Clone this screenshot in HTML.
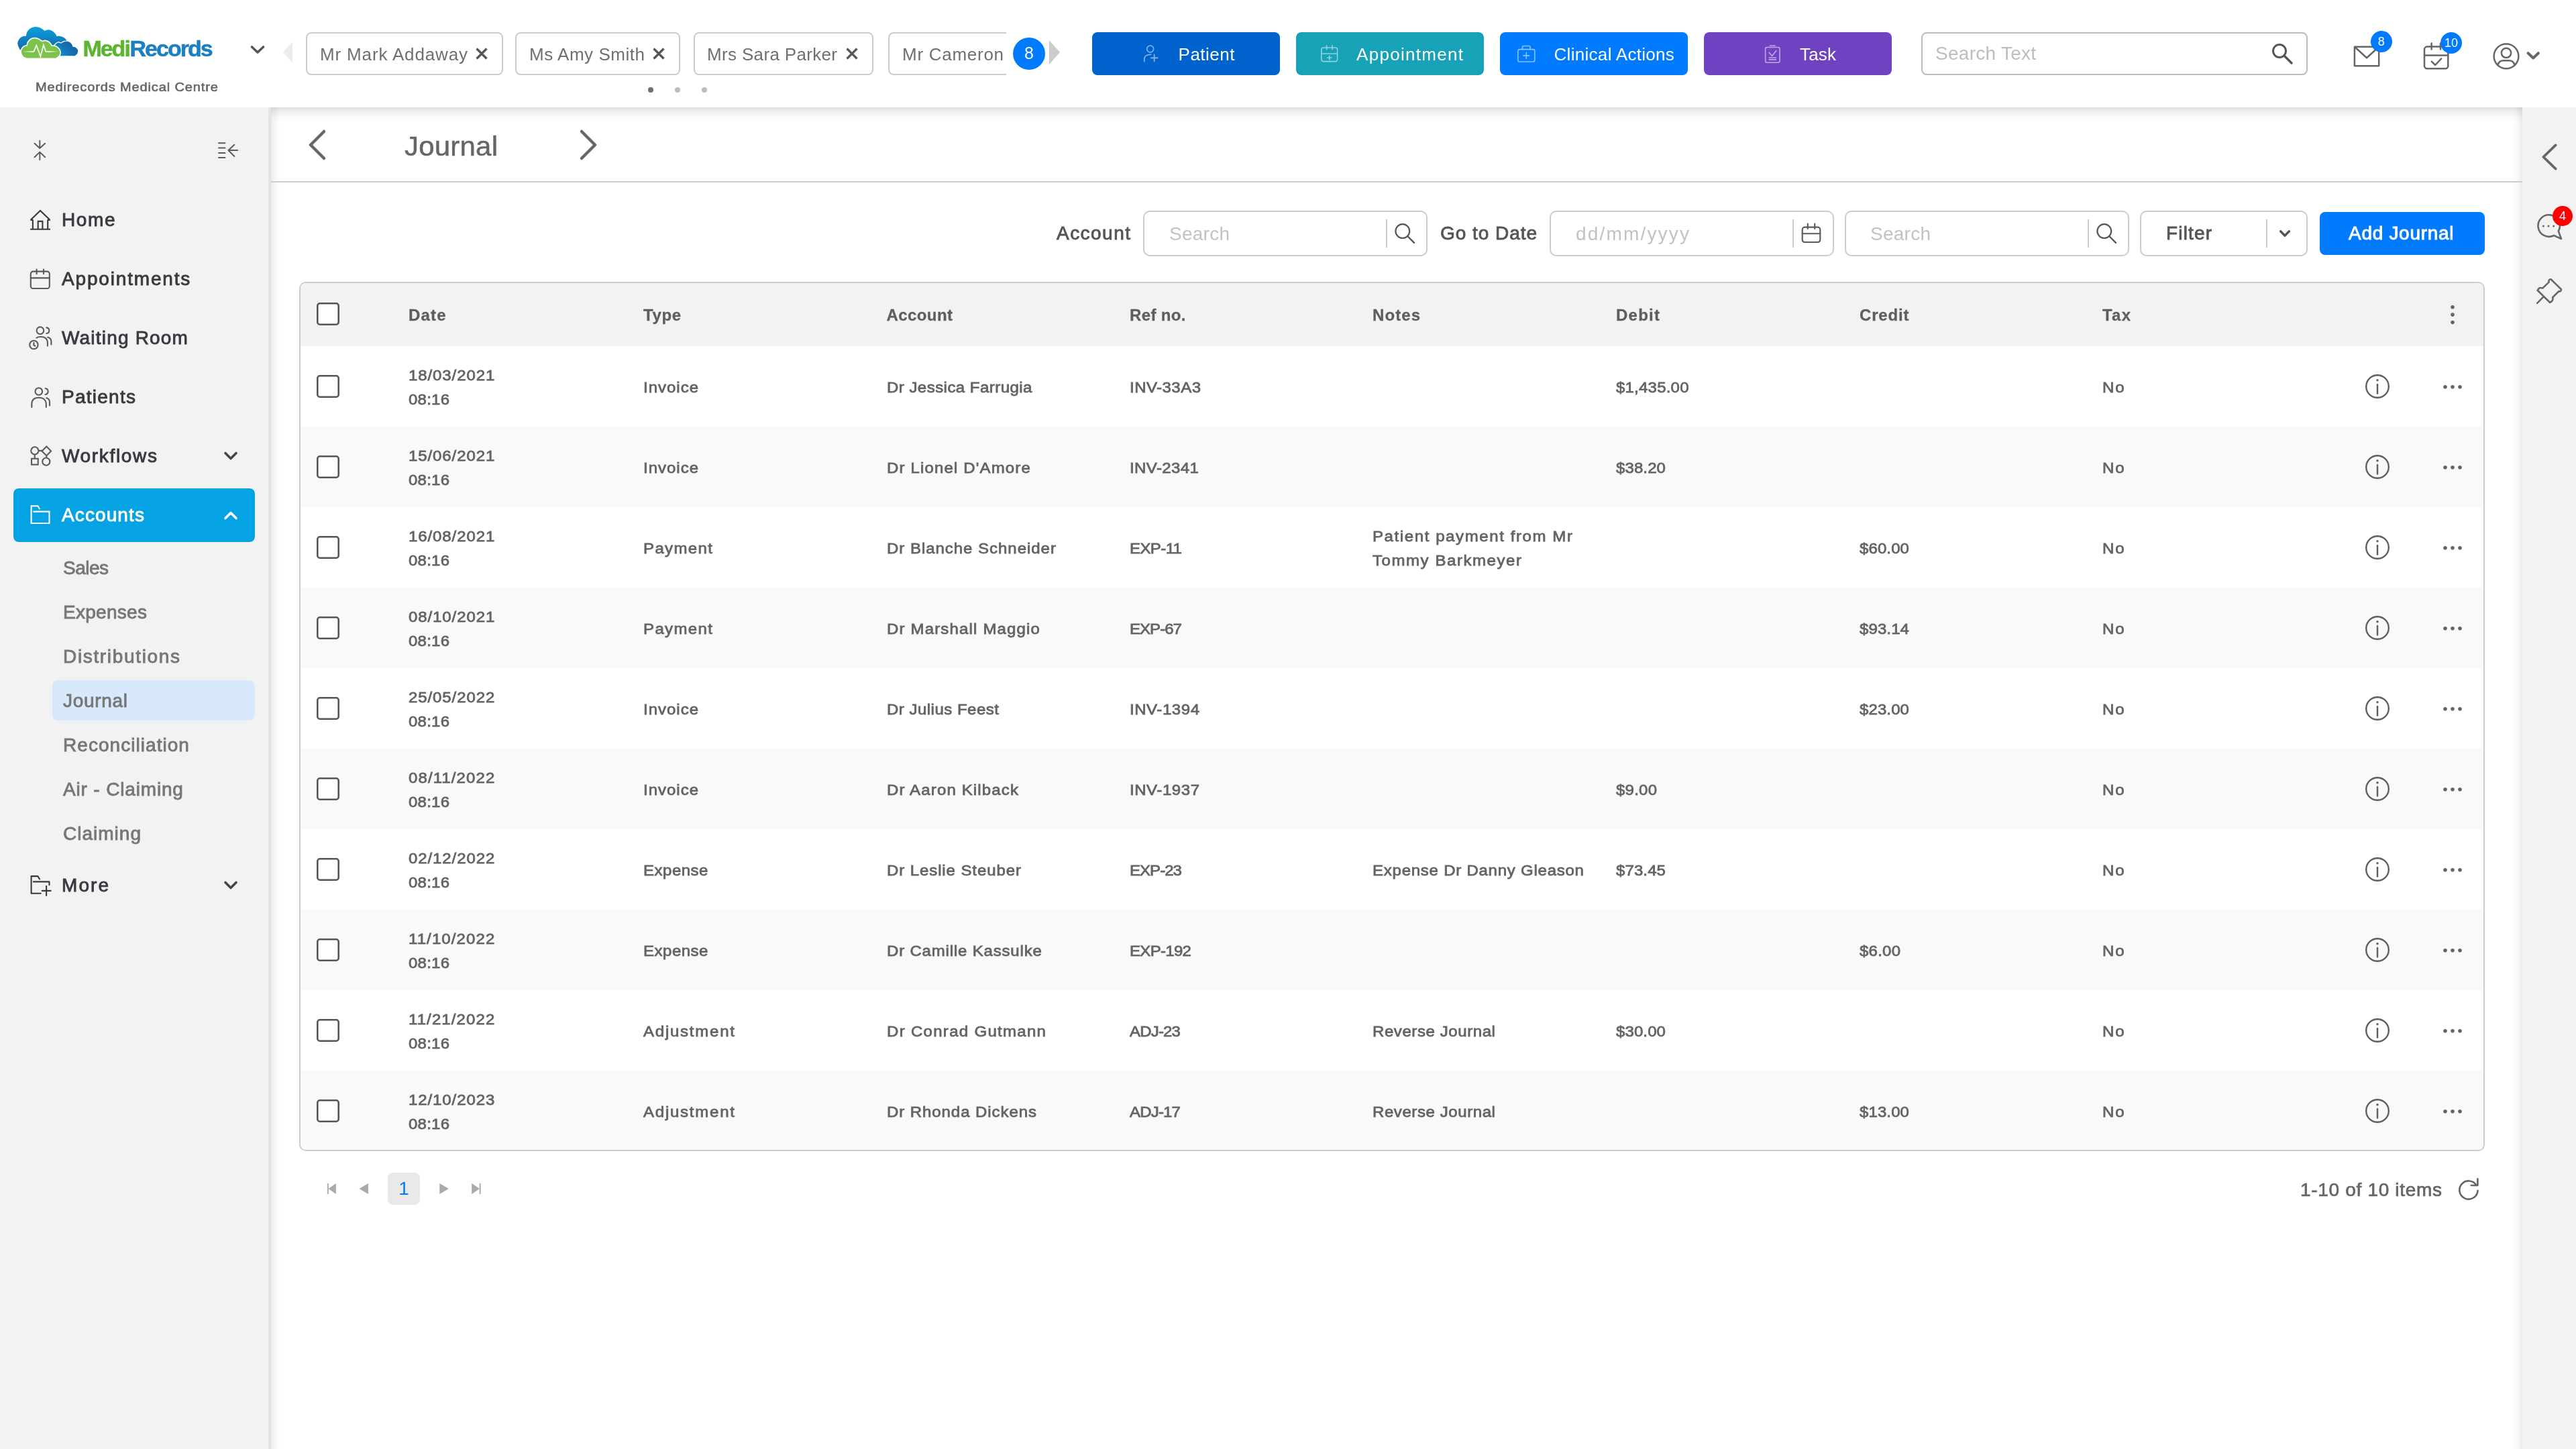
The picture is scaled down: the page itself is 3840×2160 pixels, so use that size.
<!DOCTYPE html>
<html lang="en"><head><meta charset="utf-8"><title>Journal - MediRecords</title>
<style>
html,body{margin:0;padding:0;}
body{will-change:transform;width:3840px;height:2160px;position:relative;overflow:hidden;background:#fff;font-family:"Liberation Sans",Arial,sans-serif;}
.t{position:absolute;white-space:nowrap;line-height:1;}
div{box-sizing:border-box;}
</style></head><body>
<div style="position:absolute;left:0px;top:160px;width:400px;height:2000px;background:#f2f2f2;"></div>
<div style="position:absolute;left:400px;top:160px;width:4px;height:2000px;background:#e4e4e2;"></div>
<div style="position:absolute;left:404px;top:160px;width:3356px;height:2000px;background:#fff;"></div>
<div style="position:absolute;left:404px;top:160px;width:3356px;height:22px;background:linear-gradient(to bottom, rgba(0,0,0,.125) 0, rgba(0,0,0,.07) 25%, rgba(0,0,0,.025) 60%, rgba(0,0,0,0) 100%);"></div>
<div style="position:absolute;left:404px;top:160px;width:14px;height:2000px;background:linear-gradient(to right, rgba(0,0,0,.07), rgba(0,0,0,.028) 50%, rgba(0,0,0,0));"></div>
<div style="position:absolute;left:3746px;top:160px;width:14px;height:2000px;background:linear-gradient(to left, rgba(0,0,0,.08), rgba(0,0,0,.03) 50%, rgba(0,0,0,0));"></div>
<div style="position:absolute;left:3760px;top:160px;width:80px;height:2000px;background:#f2f2f2;"></div>
<div style="position:absolute;left:0px;top:0px;width:3840px;height:160px;background:#fff;"></div>
<svg style="position:absolute;left:20px;top:34px;" width="102" height="58" viewBox="20 34 102 58" fill="none">
<defs>
<linearGradient id="lgb" gradientUnits="userSpaceOnUse" x1="0" y1="40" x2="0" y2="76"><stop offset="0" stop-color="#07a2e0"/><stop offset="1" stop-color="#1b62a2"/></linearGradient>
<linearGradient id="lgb2" gradientUnits="userSpaceOnUse" x1="112" y1="62" x2="88" y2="84"><stop offset="0" stop-color="#1a5e9b"/><stop offset=".55" stop-color="#1474b4"/><stop offset="1" stop-color="#0a98da"/></linearGradient>
<linearGradient id="lgp" gradientUnits="userSpaceOnUse" x1="34" y1="0" x2="87" y2="0"><stop offset="0" stop-color="#fff" stop-opacity="0"/><stop offset=".25" stop-color="#fff"/><stop offset=".75" stop-color="#fff"/><stop offset="1" stop-color="#fff" stop-opacity="0"/></linearGradient>
</defs>
<path d="M29.7 74.0 C29.1 72.6 26.6 68.0 26.3 65.5 C26.0 63.0 26.9 60.8 28.1 59.0 C29.3 57.2 31.5 55.5 33.3 54.6 C35.1 53.7 37.9 53.9 38.8 53.8 C39.1 52.7 39.4 49.3 40.6 47.3 C41.8 45.3 44.1 42.9 46.2 41.7 C48.4 40.5 51.1 39.9 53.5 39.9 C55.9 39.9 58.2 40.7 60.4 41.7 C62.6 42.7 65.7 45.2 66.8 45.9 C67.8 45.6 70.5 44.2 72.5 44.3 C74.5 44.4 76.8 45.4 78.5 46.5 C80.2 47.6 82.0 49.7 83.0 51.0 C84.0 52.3 84.2 53.7 84.4 54.2 C85.1 54.1 86.9 53.5 88.6 53.8 C90.3 54.1 93.0 54.9 94.7 55.8 C96.5 56.7 98.4 58.8 99.1 59.4 L99 70 L60 82 L40 82 Z" fill="url(#lgb)"/>
<path d="M80.0 68.0 C80.3 67.7 80.8 67.1 81.8 66.3 C82.8 65.5 84.7 63.4 86.2 63.0 C87.7 62.6 90.2 63.8 91.0 63.9 C91.6 63.6 93.4 62.4 94.7 61.9 C96.0 61.4 97.5 60.9 99.1 61.0 C100.6 61.1 102.6 61.5 104.0 62.3 C105.4 63.1 106.8 64.8 107.6 65.9 C108.4 67.0 108.6 68.6 108.8 69.1 C109.4 69.2 111.2 69.3 112.4 69.9 C113.6 70.5 115.0 71.7 115.7 72.8 C116.4 73.9 116.8 75.1 116.7 76.4 C116.6 77.7 116.2 79.6 115.3 80.8 C114.4 82.0 112.8 83.2 111.6 83.7 C110.4 84.2 108.6 83.9 108.0 83.9 L85 83.9 Z" fill="url(#lgb2)" stroke="#fff" stroke-width="1.2"/>
<path d="M39.4 87.3 C38.5 86.8 35.5 86.0 34.1 84.5 C32.7 83.0 31.4 80.0 31.1 78.0 C30.8 76.0 31.3 74.3 32.1 72.8 C32.9 71.2 34.8 69.5 36.1 68.7 C37.4 67.9 39.4 67.9 40.0 67.7 C40.3 66.8 40.7 63.9 41.8 62.3 C42.9 60.6 44.9 58.8 46.6 57.8 C48.4 56.8 50.4 56.5 52.3 56.6 C54.2 56.7 56.2 57.4 58.0 58.2 C59.8 59.0 62.0 61.0 62.8 61.5 C63.5 61.3 65.6 60.3 67.2 60.4 C68.8 60.5 71.0 61.4 72.5 62.3 C74.0 63.2 75.3 64.9 76.1 65.9 C76.9 66.9 77.1 67.9 77.3 68.3 C78.0 68.3 80.2 67.8 81.8 68.3 C83.3 68.8 85.3 70.0 86.6 71.1 C87.9 72.2 88.8 73.6 89.4 74.8 C90.0 76.0 90.3 77.0 90.2 78.4 C90.1 79.8 89.7 81.9 88.6 83.3 C87.5 84.7 85.1 86.2 83.8 86.9 C82.5 87.6 81.1 87.2 80.6 87.3 Z" fill="#7dc24b" stroke="#fff" stroke-width="1.6"/>
<path d="M34.5 77 L50.3 77 L54.3 67.5 L60.4 84.1 L64.8 67.1 L68.4 77 L86.6 77" stroke="url(#lgp)" stroke-width="1.7" fill="none" stroke-linejoin="miter"/>
</svg>
<span class="t" style="left:123.4px;top:54.7px;font-size:34px;font-weight:700;letter-spacing:-2px;"><span style="color:#5cb531;-webkit-text-stroke:0.5px #5cb531;">Medi</span><span style="color:#1b7fc0;-webkit-text-stroke:0.5px #1b7fc0;margin-left:0.7px;">Records</span></span>
<svg style="position:absolute;left:372px;top:66px;" width="24" height="16" viewBox="0 0 24 16" fill="none"><path d="M3.5 4 L12 12 L20.5 4" stroke="#555" stroke-width="3.6" stroke-linecap="round" stroke-linejoin="round"/></svg>
<span class="t" style="left:53.0px;top:120.3px;font-size:19.2px;color:#666;letter-spacing:0.84px;-webkit-text-stroke:0.6px #666;transform:scaleX(1.0417);transform-origin:0 0;">Medirecords Medical Centre</span>
<svg style="position:absolute;left:420px;top:60px;" width="18" height="36" viewBox="0 0 18 36" fill="none"><path d="M16 2 L2 18 L16 34 Z" fill="#ececec"/></svg>
<svg style="position:absolute;left:1562px;top:58px;" width="20" height="40" viewBox="0 0 20 40" fill="none"><path d="M2 2 L18 20 L2 38 Z" fill="#ccc"/></svg>
<div style="position:absolute;left:456px;top:48px;width:294px;height:64px;border:2px solid #ccc;border-radius:8px;background:#fff;"></div>
<span class="t" style="left:477.0px;top:68.0px;font-size:26px;color:#6f6f6f;letter-spacing:0.85px;">Mr Mark Addaway</span>
<svg style="position:absolute;left:707px;top:70px;" width="22" height="20" viewBox="0 0 22 20" fill="none"><path d="M3.5 2.5 L18.5 17.5 M18.5 2.5 L3.5 17.5" stroke="#555" stroke-width="3.2" stroke-linecap="butt"/></svg>
<div style="position:absolute;left:768px;top:48px;width:246px;height:64px;border:2px solid #ccc;border-radius:8px;background:#fff;"></div>
<span class="t" style="left:789.0px;top:68.0px;font-size:26px;color:#6f6f6f;letter-spacing:0.53px;">Ms Amy Smith</span>
<svg style="position:absolute;left:971px;top:70px;" width="22" height="20" viewBox="0 0 22 20" fill="none"><path d="M3.5 2.5 L18.5 17.5 M18.5 2.5 L3.5 17.5" stroke="#555" stroke-width="3.2" stroke-linecap="butt"/></svg>
<div style="position:absolute;left:1034px;top:48px;width:268px;height:64px;border:2px solid #ccc;border-radius:8px;background:#fff;"></div>
<span class="t" style="left:1054.0px;top:68.0px;font-size:26px;color:#6f6f6f;letter-spacing:0.34px;">Mrs Sara Parker</span>
<svg style="position:absolute;left:1259px;top:70px;" width="22" height="20" viewBox="0 0 22 20" fill="none"><path d="M3.5 2.5 L18.5 17.5 M18.5 2.5 L3.5 17.5" stroke="#555" stroke-width="3.2" stroke-linecap="butt"/></svg>
<div style="position:absolute;left:1324px;top:48px;width:176px;height:64px;border:2px solid #ccc;border-right:none;border-radius:8px 0 0 8px;background:#fff;"></div>
<span class="t" style="left:1345.0px;top:68.0px;font-size:26px;color:#6f6f6f;letter-spacing:0.73px;">Mr Cameron</span>
<div style="position:absolute;left:1510px;top:56px;width:48px;height:48px;background:#007bff;border-radius:50%;"></div>
<span class="t" style="left:1527.0px;top:67.4px;font-size:25px;color:#fff;">8</span>
<div style="position:absolute;left:966px;top:130px;width:8px;height:8px;background:#6f6f6f;border-radius:50%;"></div>
<div style="position:absolute;left:1006px;top:130px;width:8px;height:8px;background:#bdbdbd;border-radius:50%;"></div>
<div style="position:absolute;left:1046px;top:130px;width:8px;height:8px;background:#bdbdbd;border-radius:50%;"></div>
<div style="position:absolute;left:1628px;top:48px;width:280px;height:64px;background:#0062cc;border-radius:8px;"></div>
<span class="t" style="left:1756.6px;top:68.0px;font-size:26px;color:#fff;letter-spacing:0.48px;">Patient</span>
<svg style="position:absolute;left:1628px;top:48px;" width="280" height="64" viewBox="1628 48 280 64" fill="none"><g stroke="#8fb8ee" stroke-width="1.6" fill="none" stroke-linecap="round"><circle cx="1714.7" cy="73" r="5"/><path d="M1705.8 91.8 V88 C1705.8 83.5 1709.5 81.2 1715.8 81.2"/><path d="M1720.6 81.2 V91.6 M1715.6 86.4 H1725.8"/></g></svg>
<div style="position:absolute;left:1932px;top:48px;width:280px;height:64px;background:#17a2b8;border-radius:8px;"></div>
<span class="t" style="left:2022.0px;top:68.0px;font-size:26px;color:#fff;letter-spacing:1.30px;">Appointment</span>
<svg style="position:absolute;left:1932px;top:48px;" width="280" height="64" viewBox="1932 48 280 64" fill="none"><g stroke="#8fd3dd" stroke-width="1.6" fill="none" stroke-linecap="round" stroke-linejoin="round"><rect x="1969.8" y="71" width="23.8" height="20.6" rx="3"/><path d="M1969.8 80 H1993.6 M1977.6 67.8 V73.8 M1986 67.8 V73.8 M1981.7 83 V89 M1978.7 86 H1984.7"/></g></svg>
<div style="position:absolute;left:2236px;top:48px;width:280px;height:64px;background:#007bff;border-radius:8px;"></div>
<span class="t" style="left:2316.5px;top:68.0px;font-size:26px;color:#fff;letter-spacing:0.30px;">Clinical Actions</span>
<svg style="position:absolute;left:2236px;top:48px;" width="280" height="64" viewBox="2236 48 280 64" fill="none"><g stroke="#8cc4ff" stroke-width="1.6" fill="none" stroke-linecap="round" stroke-linejoin="round"><rect x="2262.8" y="73.6" width="25" height="18.4" rx="2.5"/><path d="M2269.5 73.6 V70.4 C2269.5 69 2270.3 68.5 2271.5 68.5 H2279 C2280.2 68.5 2281 69 2281 70.4 V73.6 M2275.3 78.4 V87.4 M2270.8 82.9 H2279.8"/></g></svg>
<div style="position:absolute;left:2540px;top:48px;width:280px;height:64px;background:#6f42c1;border-radius:8px;"></div>
<span class="t" style="left:2683.0px;top:68.0px;font-size:26px;color:#fff;letter-spacing:0.18px;">Task</span>
<svg style="position:absolute;left:2540px;top:48px;" width="280" height="64" viewBox="2540 48 280 64" fill="none"><g stroke="#bfa9e6" stroke-width="1.6" fill="none" stroke-linecap="round" stroke-linejoin="round"><rect x="2631.6" y="70.5" width="21.4" height="22.8" rx="2.5"/><path d="M2638.2 68 H2646.2 M2637.2 78.4 L2641.6 83.4 L2647.8 75.4 M2637.2 86 H2647.4 M2637.2 88.9 H2647.4"/></g></svg>
<div style="position:absolute;left:2864px;top:48px;width:576px;height:64px;border:2px solid #bbb;border-radius:8px;background:#fff;"></div>
<span class="t" style="left:2885.0px;top:66.3px;font-size:28px;color:#bdbdbd;letter-spacing:0.27px;">Search Text</span>
<svg style="position:absolute;left:3384px;top:62px;" width="36" height="36" viewBox="0 0 36 36" fill="none"><circle cx="14" cy="14" r="9.5" stroke="#555" stroke-width="3"/><path d="M21 21 L32 32" stroke="#555" stroke-width="3.4" stroke-linecap="round"/></svg>
<svg style="position:absolute;left:3500px;top:60px;" width="60" height="50" viewBox="3500 60 60 50" fill="none"><path d="M3509.9 69.7 H3546.2 V98.2 H3509.9 Z M3510.5 70.3 L3528 86.2 L3545.6 70.3" stroke="#666" stroke-width="2.5" stroke-linejoin="round"/></svg>
<div style="position:absolute;left:3533.5px;top:45.5px;width:32.5px;height:32.5px;background:#007bff;border-radius:50%;"></div>
<span class="t" style="left:3544.7px;top:53.4px;font-size:18px;color:#fff;">8</span>
<svg style="position:absolute;left:3604px;top:58px;" width="60" height="54" viewBox="3604 58 60 54" fill="none"><g stroke="#666" stroke-width="2.5" stroke-linecap="round" stroke-linejoin="round"><rect x="3614" y="69.6" width="35.3" height="32.6" rx="4"/><path d="M3614 82.4 H3649.3 M3624.6 64.5 V73.5 M3638 64.5 V73.5 M3624.8 91.6 L3630.2 97 L3639.2 87.4"/></g></svg>
<div style="position:absolute;left:3637.7px;top:47.7px;width:32.5px;height:32.5px;background:#007bff;border-radius:50%;"></div>
<span class="t" style="left:3644.0px;top:55.4px;font-size:18px;color:#fff;">10</span>
<svg style="position:absolute;left:3710px;top:58px;" width="90" height="54" viewBox="3710 58 90 54" fill="none"><g stroke="#666" stroke-width="2.5" fill="none" stroke-linecap="round" stroke-linejoin="round"><circle cx="3736" cy="83.8" r="18.4"/><circle cx="3736" cy="78.9" r="7.2"/><path d="M3723.6 97.2 C3724.5 91.6 3728 90.2 3732 90.2 H3740 C3744 90.2 3747.5 91.6 3748.4 97.2"/></g><path d="M3768.6 79.2 L3776.2 86.5 L3783.9 79.2" stroke="#666" stroke-width="4" stroke-linecap="round" stroke-linejoin="round"/></svg>
<svg style="position:absolute;left:44px;top:204px;" width="32" height="40" viewBox="44 204 32 40" fill="none"><g stroke="#5a5a5a" stroke-width="1.9" stroke-linecap="round" stroke-linejoin="round"><path d="M59.3 209.6 V221 M51.5 213.8 L59.3 221 L67.2 213.8 M59.3 238.2 V226.6 M51.5 234.3 L59.3 226.6 L67.2 234.3"/></g></svg>
<svg style="position:absolute;left:320px;top:206px;" width="40" height="36" viewBox="320 206 40 36" fill="none"><g stroke="#5a5a5a" stroke-width="2" stroke-linecap="round" stroke-linejoin="round"><path d="M326 213.2 H335.4 M326 220.5 H335.4 M326 227.9 H335.4 M326 235.1 H335.4 M340.4 224 H354.2 M349.3 215.8 L340.4 224 L349.3 233"/></g></svg>
<svg style="position:absolute;left:42px;top:310px;" width="36" height="36" viewBox="0 0 36 36" fill="none"><g stroke="#38393f" stroke-width="2.1" fill="none" stroke-linecap="butt" stroke-linejoin="miter"><path d="M3.3 17.9 H7.4 M28.6 17.9 H32.8 M4.2 17.2 L18 3.9 L31.9 17.2 M6.9 17.9 V31.8 M29.2 17.9 V31.8 M3.1 31.8 H33 M14.7 31.8 V19.9 H21.4 V31.8"/></g></svg>
<span class="t" style="left:92.4px;top:315.2px;font-size:26.9px;color:#393a40;letter-spacing:1.57px;-webkit-text-stroke:0.85px #393a40;transform:scaleX(1.0409);transform-origin:0 0;">Home</span>
<svg style="position:absolute;left:42px;top:398px;" width="36" height="36" viewBox="0 0 36 36" fill="none"><g stroke="#5a5a5a" stroke-width="2.1" fill="none" stroke-linecap="round" stroke-linejoin="round"><rect x="3.8" y="6.6" width="28" height="25.4" rx="3.6"/><path d="M3.8 16.4 H31.8 M12.6 3.5 V10.2 M23 3.5 V10.2"/></g></svg>
<span class="t" style="left:92.4px;top:403.2px;font-size:26.9px;color:#393a40;letter-spacing:1.76px;-webkit-text-stroke:0.85px #393a40;transform:scaleX(1.0409);transform-origin:0 0;">Appointments</span>
<svg style="position:absolute;left:42px;top:486px;" width="36" height="36" viewBox="0 0 36 36" fill="none"><g stroke="#5a5a5a" stroke-width="2.1" fill="none" stroke-linecap="round" stroke-linejoin="round"><circle cx="17.9" cy="6.65" r="5.3"/><path d="M27.4 2.4 C32.6 3.2 32.6 10.2 27.4 11"/><path d="M12.5 17.6 C14 16.5 16 16 18.5 16 C25 16 28.9 19 28.9 25 V29.6"/><path d="M29.2 16.7 C32.8 17.4 34.4 19.6 34.4 23 V27.5"/><circle cx="8.4" cy="28" r="6.2"/><path d="M8.4 24.8 V28.5 L10.3 29.6"/></g></svg>
<span class="t" style="left:92.4px;top:491.2px;font-size:26.9px;color:#393a40;letter-spacing:1.15px;-webkit-text-stroke:0.85px #393a40;transform:scaleX(1.0409);transform-origin:0 0;">Waiting Room</span>
<svg style="position:absolute;left:42px;top:574px;" width="36" height="36" viewBox="0 0 36 36" fill="none"><g stroke="#5a5a5a" stroke-width="2.1" fill="none" stroke-linecap="round" stroke-linejoin="round"><circle cx="15.8" cy="9.5" r="5.3"/><path d="M25.6 5 C31 5.8 31 13.2 25.6 14"/><path d="M5.3 32.9 V28.6 C5.3 22.5 9 18.8 15.8 18.8 C22.8 18.8 26.8 22.5 26.8 28.6 V32.9"/><path d="M27.3 19.2 C30.6 20 32 22.3 32 25.5 V30.5"/></g></svg>
<span class="t" style="left:92.4px;top:579.2px;font-size:26.9px;color:#393a40;letter-spacing:1.21px;-webkit-text-stroke:0.85px #393a40;transform:scaleX(1.0409);transform-origin:0 0;">Patients</span>
<svg style="position:absolute;left:42px;top:662px;" width="36" height="36" viewBox="0 0 36 36" fill="none"><g stroke="#5a5a5a" stroke-width="2.1" fill="none" stroke-linecap="miter" stroke-linejoin="miter"><circle cx="9.8" cy="9.9" r="5.6"/><path d="M27.3 3.6 L34.1 10.4 L27.3 17.2 L20.5 10.4 Z"/><rect x="5" y="21.7" width="9.7" height="8.9"/><circle cx="26.8" cy="26.1" r="5.6"/><path d="M15.4 9.9 H21 M9.8 15.5 V21.7 M27.3 17.2 V20.5"/></g></svg>
<span class="t" style="left:92.4px;top:667.2px;font-size:26.9px;color:#393a40;letter-spacing:1.61px;-webkit-text-stroke:0.85px #393a40;transform:scaleX(1.0409);transform-origin:0 0;">Workflows</span>
<svg style="position:absolute;left:332px;top:672px;" width="24" height="16" viewBox="0 0 24 16" fill="none"><path d="M4 3.5 L12 11.5 L20 3.5" stroke="#444" stroke-width="3.6" stroke-linecap="round" stroke-linejoin="round"/></svg>
<div style="position:absolute;left:20px;top:728px;width:360px;height:80px;background:#05a3e4;border-radius:8px;"></div>
<svg style="position:absolute;left:42px;top:750px;" width="36" height="36" viewBox="0 0 36 36" fill="none"><g stroke="#fff" stroke-width="2.1" fill="none" stroke-linecap="butt" stroke-linejoin="miter"><path d="M17.3 9 L14.3 4.3 H4.6 V30 H31.5 V12.6 H7.4"/></g></svg>
<span class="t" style="left:92.4px;top:755.2px;font-size:26.9px;color:#fff;letter-spacing:1.07px;-webkit-text-stroke:0.85px #fff;transform:scaleX(1.0409);transform-origin:0 0;">Accounts</span>
<svg style="position:absolute;left:332px;top:760px;" width="24" height="16" viewBox="0 0 24 16" fill="none"><path d="M4 12.5 L12 4.5 L20 12.5" stroke="#fff" stroke-width="3.6" stroke-linecap="round" stroke-linejoin="round"/></svg>
<svg style="position:absolute;left:42px;top:1302px;" width="36" height="36" viewBox="0 0 36 36" fill="none"><g stroke="#38393f" stroke-width="2.1" fill="none" stroke-linecap="round" stroke-linejoin="round"><path d="M17 8.5 L14.3 4.15 H4.6 V29.8 H18.8 M7.9 12.4 H31.5 V17.2 M27.1 18.8 V32.9 M20.7 25.9 H33.7"/></g></svg>
<span class="t" style="left:92.4px;top:1307.2px;font-size:26.9px;color:#393a40;letter-spacing:1.99px;-webkit-text-stroke:0.85px #393a40;transform:scaleX(1.0409);transform-origin:0 0;">More</span>
<svg style="position:absolute;left:332px;top:1312px;" width="24" height="16" viewBox="0 0 24 16" fill="none"><path d="M4 3.5 L12 11.5 L20 3.5" stroke="#444" stroke-width="3.6" stroke-linecap="round" stroke-linejoin="round"/></svg>
<span class="t" style="left:94.0px;top:833.8px;font-size:26.9px;color:#777;letter-spacing:-0.49px;-webkit-text-stroke:0.85px #777;transform:scaleX(1.0409);transform-origin:0 0;">Sales</span>
<span class="t" style="left:94.0px;top:899.8px;font-size:26.9px;color:#777;letter-spacing:0.28px;-webkit-text-stroke:0.85px #777;transform:scaleX(1.0409);transform-origin:0 0;">Expenses</span>
<span class="t" style="left:94.0px;top:965.8px;font-size:26.9px;color:#777;letter-spacing:1.60px;-webkit-text-stroke:0.85px #777;transform:scaleX(1.0409);transform-origin:0 0;">Distributions</span>
<div style="position:absolute;left:78px;top:1014px;width:302px;height:60px;background:#d8e9fb;border-radius:8px;"></div>
<span class="t" style="left:94.0px;top:1031.8px;font-size:26.9px;color:#777;letter-spacing:0.67px;-webkit-text-stroke:0.85px #777;transform:scaleX(1.0409);transform-origin:0 0;">Journal</span>
<span class="t" style="left:94.0px;top:1097.8px;font-size:26.9px;color:#777;letter-spacing:1.01px;-webkit-text-stroke:0.85px #777;transform:scaleX(1.0409);transform-origin:0 0;">Reconciliation</span>
<span class="t" style="left:94.0px;top:1163.8px;font-size:26.9px;color:#777;letter-spacing:0.81px;-webkit-text-stroke:0.85px #777;transform:scaleX(1.0409);transform-origin:0 0;">Air - Claiming</span>
<span class="t" style="left:94.0px;top:1229.8px;font-size:26.9px;color:#777;letter-spacing:0.97px;-webkit-text-stroke:0.85px #777;transform:scaleX(1.0409);transform-origin:0 0;">Claiming</span>
<svg style="position:absolute;left:3780px;top:206px;" width="44" height="56" viewBox="3780 206 44 56" fill="none"><path d="M3809.6 216.4 L3791.4 234 L3809.6 251.6" stroke="#666" stroke-width="3.8" stroke-linecap="round" stroke-linejoin="round"/></svg>
<svg style="position:absolute;left:3774px;top:312px;" width="56" height="54" viewBox="3774 312 56 54" fill="none"><path d="M3807 351 L3818 356 L3813.8 344.5 A16.2 16.2 0 1 0 3807 351 Z" stroke="#666" stroke-width="2.6" fill="none" stroke-linejoin="round"/><circle cx="3791.4" cy="337" r="1.5" fill="#666"/><circle cx="3799" cy="337" r="1.5" fill="#666"/><circle cx="3806.6" cy="337" r="1.5" fill="#666"/></svg>
<div style="position:absolute;left:3805px;top:307px;width:30px;height:30px;background:#f00;border-radius:50%;"></div>
<span class="t" style="left:3815.0px;top:313.2px;font-size:18px;color:#fff;">4</span>
<svg style="position:absolute;left:3774px;top:408px;" width="52" height="52" viewBox="3774 408 52 52" fill="none"><g stroke="#666" stroke-width="2.6" fill="none" stroke-linejoin="round" stroke-linecap="round"><path d="M3802.6 416.2 L3817.8 431.2 C3818.3 433.6 3816.6 434.8 3814.4 434.3 L3805.2 443.2 C3805.8 445.8 3805.4 447.4 3804.4 448.6 L3801.2 451 L3782.6 432.8 L3785 429.6 C3786.4 428.8 3788 428.8 3790.2 429.6 L3799.6 420.6 C3798.9 418.2 3800 416 3802.6 416.2 Z"/><path d="M3791.6 442.4 L3782.2 451.8"/></g></svg>
<svg style="position:absolute;left:456px;top:190px;" width="34" height="52" viewBox="0 0 34 52" fill="none"><path d="M27 6 L7 26 L27 46" stroke="#666" stroke-width="4.5" stroke-linecap="round" stroke-linejoin="round"/></svg>
<svg style="position:absolute;left:860px;top:190px;" width="34" height="52" viewBox="0 0 34 52" fill="none"><path d="M7 6 L27 26 L7 46" stroke="#666" stroke-width="4.5" stroke-linecap="round" stroke-linejoin="round"/></svg>
<span class="t" style="left:603.0px;top:197.8px;font-size:41.3px;color:#666;letter-spacing:0.21px;-webkit-text-stroke:0.5px #666;transform:scaleX(1.0169);transform-origin:0 0;">Journal</span>
<div style="position:absolute;left:404px;top:270px;width:3356px;height:2px;background:#ccc;"></div>
<span class="t" style="left:1574.5px;top:335.3px;font-size:26.9px;color:#555;letter-spacing:1.41px;-webkit-text-stroke:0.85px #555;transform:scaleX(1.0409);transform-origin:0 0;">Account</span>
<div style="position:absolute;left:1704px;top:314px;width:424px;height:68px;border:2px solid #ccc;border-radius:10px;background:#fff;"></div>
<span class="t" style="left:1743.0px;top:334.8px;font-size:28px;color:#c2c2c2;letter-spacing:0.26px;">Search</span>
<div style="position:absolute;left:2066px;top:327px;width:2px;height:42px;background:#ccc;"></div>
<svg style="position:absolute;left:2077px;top:331px;" width="34" height="34" viewBox="0 0 34 34" fill="none"><circle cx="13.8" cy="13.6" r="10.4" stroke="#555" stroke-width="2.2"/><path d="M21.2 21 L31 30.8" stroke="#555" stroke-width="2.4" stroke-linecap="round"/></svg>
<span class="t" style="left:2147.0px;top:335.3px;font-size:26.9px;color:#555;letter-spacing:0.92px;-webkit-text-stroke:0.85px #555;transform:scaleX(1.0409);transform-origin:0 0;">Go to Date</span>
<div style="position:absolute;left:2310px;top:314px;width:424px;height:68px;border:2px solid #ccc;border-radius:10px;background:#fff;"></div>
<span class="t" style="left:2349.0px;top:334.8px;font-size:28px;color:#c2c2c2;letter-spacing:2.18px;">dd/mm/yyyy</span>
<div style="position:absolute;left:2672px;top:327px;width:2px;height:42px;background:#ccc;"></div>
<svg style="position:absolute;left:2680px;top:328px;" width="40" height="40" viewBox="2680 328 40 40" fill="none"><g stroke="#5a5a5a" stroke-width="2.1" fill="none" stroke-linecap="round" stroke-linejoin="round"><rect x="2686.7" y="338.6" width="26.6" height="22.4" rx="3.5"/><path d="M2686.7 348.3 H2713.3 M2694.8 333.6 V341 M2705.2 333.6 V341"/></g></svg>
<div style="position:absolute;left:2750px;top:314px;width:424px;height:68px;border:2px solid #ccc;border-radius:10px;background:#fff;"></div>
<span class="t" style="left:2788.0px;top:334.8px;font-size:28px;color:#c2c2c2;letter-spacing:0.26px;">Search</span>
<div style="position:absolute;left:3112px;top:327px;width:2px;height:42px;background:#ccc;"></div>
<svg style="position:absolute;left:3123px;top:331px;" width="34" height="34" viewBox="0 0 34 34" fill="none"><circle cx="13.8" cy="13.6" r="10.4" stroke="#555" stroke-width="2.2"/><path d="M21.2 21 L31 30.8" stroke="#555" stroke-width="2.4" stroke-linecap="round"/></svg>
<div style="position:absolute;left:3190px;top:314px;width:250px;height:68px;border:2px solid #ccc;border-radius:10px;background:#fff;"></div>
<span class="t" style="left:3229.0px;top:335.3px;font-size:26.9px;color:#555;letter-spacing:1.11px;-webkit-text-stroke:0.85px #555;transform:scaleX(1.0409);transform-origin:0 0;">Filter</span>
<div style="position:absolute;left:3378px;top:327px;width:2px;height:42px;background:#ccc;"></div>
<svg style="position:absolute;left:3394px;top:338px;" width="24" height="20" viewBox="3394 338 24 20" fill="none"><path d="M3399.6 344.8 L3406 351.2 L3412.4 344.8" stroke="#555" stroke-width="3.4" stroke-linecap="round" stroke-linejoin="round"/></svg>
<div style="position:absolute;left:3458px;top:316px;width:246px;height:64px;background:#007bff;border-radius:8px;"></div>
<span class="t" style="left:3500.5px;top:335.3px;font-size:26.9px;color:#fff;letter-spacing:0.68px;-webkit-text-stroke:0.85px #fff;transform:scaleX(1.0409);transform-origin:0 0;">Add Journal</span>
<div style="position:absolute;left:446px;top:420px;width:3258px;height:1296px;border:2px solid #ccc;border-radius:10px;background:#fff;overflow:hidden;"></div>
<div style="position:absolute;left:448px;top:422px;width:3254px;height:94px;background:#f2f2f2;border-radius:8px 8px 0 0;"></div>
<span class="t" style="left:609.0px;top:457.7px;font-size:24px;color:#5e5e5e;font-weight:700;letter-spacing:1.16px;-webkit-text-stroke:0.3px #5e5e5e;">Date</span>
<span class="t" style="left:959.0px;top:457.7px;font-size:24px;color:#5e5e5e;font-weight:700;letter-spacing:0.59px;-webkit-text-stroke:0.3px #5e5e5e;">Type</span>
<span class="t" style="left:1321.5px;top:457.7px;font-size:24px;color:#5e5e5e;font-weight:700;letter-spacing:0.42px;-webkit-text-stroke:0.3px #5e5e5e;">Account</span>
<span class="t" style="left:1684.0px;top:457.7px;font-size:24px;color:#5e5e5e;font-weight:700;letter-spacing:0.36px;-webkit-text-stroke:0.3px #5e5e5e;">Ref no.</span>
<span class="t" style="left:2046.0px;top:457.7px;font-size:24px;color:#5e5e5e;font-weight:700;letter-spacing:1.08px;-webkit-text-stroke:0.3px #5e5e5e;">Notes</span>
<span class="t" style="left:2409.0px;top:457.7px;font-size:24px;color:#5e5e5e;font-weight:700;letter-spacing:1.25px;-webkit-text-stroke:0.3px #5e5e5e;">Debit</span>
<span class="t" style="left:2772.0px;top:457.7px;font-size:24px;color:#5e5e5e;font-weight:700;letter-spacing:0.83px;-webkit-text-stroke:0.3px #5e5e5e;">Credit</span>
<span class="t" style="left:3134.0px;top:457.7px;font-size:24px;color:#5e5e5e;font-weight:700;letter-spacing:1.21px;-webkit-text-stroke:0.3px #5e5e5e;">Tax</span>
<svg style="position:absolute;left:470px;top:449px;" width="38" height="38" viewBox="0 0 38 38" fill="none"><rect x="3.3" y="3.3" width="31.4" height="31.4" rx="3.5" fill="#fff" stroke="#555" stroke-width="2.6"/></svg>
<svg style="position:absolute;left:3646px;top:450px;" width="20" height="38" viewBox="3646 450 20 38" fill="none"><g fill="#666"><circle cx="3656" cy="457.7" r="2.8"/><circle cx="3656" cy="469.1" r="2.8"/><circle cx="3656" cy="480.5" r="2.8"/></g></svg>
<svg style="position:absolute;left:470px;top:557px;" width="38" height="38" viewBox="0 0 38 38" fill="none"><rect x="3.3" y="3.3" width="31.4" height="31.4" rx="3.5" fill="#fff" stroke="#555" stroke-width="2.6"/></svg>
<span class="t" style="left:609.0px;top:548.2px;font-size:22.9px;color:#646464;letter-spacing:0.87px;-webkit-text-stroke:0.8px #646464;transform:scaleX(1.0480);transform-origin:0 0;">18/03/2021</span>
<span class="t" style="left:609.0px;top:584.2px;font-size:22.9px;color:#646464;letter-spacing:0.23px;-webkit-text-stroke:0.8px #646464;transform:scaleX(1.0480);transform-origin:0 0;">08:16</span>
<span class="t" style="left:959.0px;top:566.2px;font-size:22.9px;color:#646464;letter-spacing:0.95px;-webkit-text-stroke:0.8px #646464;transform:scaleX(1.0480);transform-origin:0 0;">Invoice</span>
<span class="t" style="left:1321.5px;top:566.2px;font-size:22.9px;color:#646464;letter-spacing:0.45px;-webkit-text-stroke:0.8px #646464;transform:scaleX(1.0480);transform-origin:0 0;">Dr Jessica Farrugia</span>
<span class="t" style="left:1684.0px;top:566.2px;font-size:22.9px;color:#646464;letter-spacing:0.45px;-webkit-text-stroke:0.8px #646464;transform:scaleX(1.0480);transform-origin:0 0;">INV-33A3</span>
<span class="t" style="left:2409.0px;top:566.2px;font-size:22.9px;color:#646464;letter-spacing:0.21px;-webkit-text-stroke:0.8px #646464;transform:scaleX(1.0480);transform-origin:0 0;">$1,435.00</span>
<span class="t" style="left:3134.0px;top:566.2px;font-size:22.9px;color:#646464;letter-spacing:1.74px;-webkit-text-stroke:0.8px #646464;transform:scaleX(1.0480);transform-origin:0 0;">No</span>
<svg style="position:absolute;left:3524px;top:556px;" width="40" height="40" viewBox="0 0 40 40" fill="none"><circle cx="20" cy="20" r="16.8" stroke="#606060" stroke-width="2.4"/><circle cx="20" cy="10.8" r="1.7" fill="#606060"/><path d="M20 17 V30.5" stroke="#606060" stroke-width="2.5" stroke-linecap="round"/></svg>
<svg style="position:absolute;left:3636px;top:567px;" width="40" height="20" viewBox="0 0 40 20" fill="none"><g fill="#666"><circle cx="9" cy="9.8" r="2.8"/><circle cx="20" cy="9.8" r="2.8"/><circle cx="31" cy="9.8" r="2.8"/></g></svg>
<div style="position:absolute;left:448px;top:636px;width:3254px;height:120px;background:#f9f9f9;"></div>
<svg style="position:absolute;left:470px;top:677px;" width="38" height="38" viewBox="0 0 38 38" fill="none"><rect x="3.3" y="3.3" width="31.4" height="31.4" rx="3.5" fill="#fff" stroke="#555" stroke-width="2.6"/></svg>
<span class="t" style="left:609.0px;top:668.2px;font-size:22.9px;color:#646464;letter-spacing:0.87px;-webkit-text-stroke:0.8px #646464;transform:scaleX(1.0480);transform-origin:0 0;">15/06/2021</span>
<span class="t" style="left:609.0px;top:704.2px;font-size:22.9px;color:#646464;letter-spacing:0.23px;-webkit-text-stroke:0.8px #646464;transform:scaleX(1.0480);transform-origin:0 0;">08:16</span>
<span class="t" style="left:959.0px;top:686.2px;font-size:22.9px;color:#646464;letter-spacing:0.95px;-webkit-text-stroke:0.8px #646464;transform:scaleX(1.0480);transform-origin:0 0;">Invoice</span>
<span class="t" style="left:1321.5px;top:686.2px;font-size:22.9px;color:#646464;letter-spacing:1.11px;-webkit-text-stroke:0.8px #646464;transform:scaleX(1.0480);transform-origin:0 0;">Dr Lionel D'Amore</span>
<span class="t" style="left:1684.0px;top:686.2px;font-size:22.9px;color:#646464;letter-spacing:0.40px;-webkit-text-stroke:0.8px #646464;transform:scaleX(1.0480);transform-origin:0 0;">INV-2341</span>
<span class="t" style="left:2409.0px;top:686.2px;font-size:22.9px;color:#646464;letter-spacing:0.11px;-webkit-text-stroke:0.8px #646464;transform:scaleX(1.0480);transform-origin:0 0;">$38.20</span>
<span class="t" style="left:3134.0px;top:686.2px;font-size:22.9px;color:#646464;letter-spacing:1.74px;-webkit-text-stroke:0.8px #646464;transform:scaleX(1.0480);transform-origin:0 0;">No</span>
<svg style="position:absolute;left:3524px;top:676px;" width="40" height="40" viewBox="0 0 40 40" fill="none"><circle cx="20" cy="20" r="16.8" stroke="#606060" stroke-width="2.4"/><circle cx="20" cy="10.8" r="1.7" fill="#606060"/><path d="M20 17 V30.5" stroke="#606060" stroke-width="2.5" stroke-linecap="round"/></svg>
<svg style="position:absolute;left:3636px;top:687px;" width="40" height="20" viewBox="0 0 40 20" fill="none"><g fill="#666"><circle cx="9" cy="9.8" r="2.8"/><circle cx="20" cy="9.8" r="2.8"/><circle cx="31" cy="9.8" r="2.8"/></g></svg>
<svg style="position:absolute;left:470px;top:797px;" width="38" height="38" viewBox="0 0 38 38" fill="none"><rect x="3.3" y="3.3" width="31.4" height="31.4" rx="3.5" fill="#fff" stroke="#555" stroke-width="2.6"/></svg>
<span class="t" style="left:609.0px;top:788.2px;font-size:22.9px;color:#646464;letter-spacing:0.87px;-webkit-text-stroke:0.8px #646464;transform:scaleX(1.0480);transform-origin:0 0;">16/08/2021</span>
<span class="t" style="left:609.0px;top:824.2px;font-size:22.9px;color:#646464;letter-spacing:0.23px;-webkit-text-stroke:0.8px #646464;transform:scaleX(1.0480);transform-origin:0 0;">08:16</span>
<span class="t" style="left:959.0px;top:806.2px;font-size:22.9px;color:#646464;letter-spacing:1.32px;-webkit-text-stroke:0.8px #646464;transform:scaleX(1.0480);transform-origin:0 0;">Payment</span>
<span class="t" style="left:1321.5px;top:806.2px;font-size:22.9px;color:#646464;letter-spacing:0.93px;-webkit-text-stroke:0.8px #646464;transform:scaleX(1.0480);transform-origin:0 0;">Dr Blanche Schneider</span>
<span class="t" style="left:1684.0px;top:806.2px;font-size:22.9px;color:#646464;letter-spacing:-0.56px;-webkit-text-stroke:0.8px #646464;transform:scaleX(1.0480);transform-origin:0 0;">EXP-11</span>
<span class="t" style="left:2046.0px;top:788.2px;font-size:22.9px;color:#646464;letter-spacing:1.53px;-webkit-text-stroke:0.8px #646464;transform:scaleX(1.0480);transform-origin:0 0;">Patient payment from Mr</span>
<span class="t" style="left:2046.0px;top:824.2px;font-size:22.9px;color:#646464;letter-spacing:1.50px;-webkit-text-stroke:0.8px #646464;transform:scaleX(1.0480);transform-origin:0 0;">Tommy Barkmeyer</span>
<span class="t" style="left:2772.0px;top:806.2px;font-size:22.9px;color:#646464;letter-spacing:0.11px;-webkit-text-stroke:0.8px #646464;transform:scaleX(1.0480);transform-origin:0 0;">$60.00</span>
<span class="t" style="left:3134.0px;top:806.2px;font-size:22.9px;color:#646464;letter-spacing:1.74px;-webkit-text-stroke:0.8px #646464;transform:scaleX(1.0480);transform-origin:0 0;">No</span>
<svg style="position:absolute;left:3524px;top:796px;" width="40" height="40" viewBox="0 0 40 40" fill="none"><circle cx="20" cy="20" r="16.8" stroke="#606060" stroke-width="2.4"/><circle cx="20" cy="10.8" r="1.7" fill="#606060"/><path d="M20 17 V30.5" stroke="#606060" stroke-width="2.5" stroke-linecap="round"/></svg>
<svg style="position:absolute;left:3636px;top:807px;" width="40" height="20" viewBox="0 0 40 20" fill="none"><g fill="#666"><circle cx="9" cy="9.8" r="2.8"/><circle cx="20" cy="9.8" r="2.8"/><circle cx="31" cy="9.8" r="2.8"/></g></svg>
<div style="position:absolute;left:448px;top:876px;width:3254px;height:120px;background:#f9f9f9;"></div>
<svg style="position:absolute;left:470px;top:917px;" width="38" height="38" viewBox="0 0 38 38" fill="none"><rect x="3.3" y="3.3" width="31.4" height="31.4" rx="3.5" fill="#fff" stroke="#555" stroke-width="2.6"/></svg>
<span class="t" style="left:609.0px;top:908.2px;font-size:22.9px;color:#646464;letter-spacing:0.87px;-webkit-text-stroke:0.8px #646464;transform:scaleX(1.0480);transform-origin:0 0;">08/10/2021</span>
<span class="t" style="left:609.0px;top:944.2px;font-size:22.9px;color:#646464;letter-spacing:0.23px;-webkit-text-stroke:0.8px #646464;transform:scaleX(1.0480);transform-origin:0 0;">08:16</span>
<span class="t" style="left:959.0px;top:926.2px;font-size:22.9px;color:#646464;letter-spacing:1.32px;-webkit-text-stroke:0.8px #646464;transform:scaleX(1.0480);transform-origin:0 0;">Payment</span>
<span class="t" style="left:1321.5px;top:926.2px;font-size:22.9px;color:#646464;letter-spacing:1.12px;-webkit-text-stroke:0.8px #646464;transform:scaleX(1.0480);transform-origin:0 0;">Dr Marshall Maggio</span>
<span class="t" style="left:1684.0px;top:926.2px;font-size:22.9px;color:#646464;letter-spacing:-0.90px;-webkit-text-stroke:0.8px #646464;transform:scaleX(1.0480);transform-origin:0 0;">EXP-67</span>
<span class="t" style="left:2772.0px;top:926.2px;font-size:22.9px;color:#646464;letter-spacing:0.11px;-webkit-text-stroke:0.8px #646464;transform:scaleX(1.0480);transform-origin:0 0;">$93.14</span>
<span class="t" style="left:3134.0px;top:926.2px;font-size:22.9px;color:#646464;letter-spacing:1.74px;-webkit-text-stroke:0.8px #646464;transform:scaleX(1.0480);transform-origin:0 0;">No</span>
<svg style="position:absolute;left:3524px;top:916px;" width="40" height="40" viewBox="0 0 40 40" fill="none"><circle cx="20" cy="20" r="16.8" stroke="#606060" stroke-width="2.4"/><circle cx="20" cy="10.8" r="1.7" fill="#606060"/><path d="M20 17 V30.5" stroke="#606060" stroke-width="2.5" stroke-linecap="round"/></svg>
<svg style="position:absolute;left:3636px;top:927px;" width="40" height="20" viewBox="0 0 40 20" fill="none"><g fill="#666"><circle cx="9" cy="9.8" r="2.8"/><circle cx="20" cy="9.8" r="2.8"/><circle cx="31" cy="9.8" r="2.8"/></g></svg>
<svg style="position:absolute;left:470px;top:1037px;" width="38" height="38" viewBox="0 0 38 38" fill="none"><rect x="3.3" y="3.3" width="31.4" height="31.4" rx="3.5" fill="#fff" stroke="#555" stroke-width="2.6"/></svg>
<span class="t" style="left:609.0px;top:1028.2px;font-size:22.9px;color:#646464;letter-spacing:0.87px;-webkit-text-stroke:0.8px #646464;transform:scaleX(1.0480);transform-origin:0 0;">25/05/2022</span>
<span class="t" style="left:609.0px;top:1064.2px;font-size:22.9px;color:#646464;letter-spacing:0.23px;-webkit-text-stroke:0.8px #646464;transform:scaleX(1.0480);transform-origin:0 0;">08:16</span>
<span class="t" style="left:959.0px;top:1046.2px;font-size:22.9px;color:#646464;letter-spacing:0.95px;-webkit-text-stroke:0.8px #646464;transform:scaleX(1.0480);transform-origin:0 0;">Invoice</span>
<span class="t" style="left:1321.5px;top:1046.2px;font-size:22.9px;color:#646464;letter-spacing:0.47px;-webkit-text-stroke:0.8px #646464;transform:scaleX(1.0480);transform-origin:0 0;">Dr Julius Feest</span>
<span class="t" style="left:1684.0px;top:1046.2px;font-size:22.9px;color:#646464;letter-spacing:0.54px;-webkit-text-stroke:0.8px #646464;transform:scaleX(1.0480);transform-origin:0 0;">INV-1394</span>
<span class="t" style="left:2772.0px;top:1046.2px;font-size:22.9px;color:#646464;letter-spacing:0.11px;-webkit-text-stroke:0.8px #646464;transform:scaleX(1.0480);transform-origin:0 0;">$23.00</span>
<span class="t" style="left:3134.0px;top:1046.2px;font-size:22.9px;color:#646464;letter-spacing:1.74px;-webkit-text-stroke:0.8px #646464;transform:scaleX(1.0480);transform-origin:0 0;">No</span>
<svg style="position:absolute;left:3524px;top:1036px;" width="40" height="40" viewBox="0 0 40 40" fill="none"><circle cx="20" cy="20" r="16.8" stroke="#606060" stroke-width="2.4"/><circle cx="20" cy="10.8" r="1.7" fill="#606060"/><path d="M20 17 V30.5" stroke="#606060" stroke-width="2.5" stroke-linecap="round"/></svg>
<svg style="position:absolute;left:3636px;top:1047px;" width="40" height="20" viewBox="0 0 40 20" fill="none"><g fill="#666"><circle cx="9" cy="9.8" r="2.8"/><circle cx="20" cy="9.8" r="2.8"/><circle cx="31" cy="9.8" r="2.8"/></g></svg>
<div style="position:absolute;left:448px;top:1116px;width:3254px;height:120px;background:#f9f9f9;"></div>
<svg style="position:absolute;left:470px;top:1157px;" width="38" height="38" viewBox="0 0 38 38" fill="none"><rect x="3.3" y="3.3" width="31.4" height="31.4" rx="3.5" fill="#fff" stroke="#555" stroke-width="2.6"/></svg>
<span class="t" style="left:609.0px;top:1148.2px;font-size:22.9px;color:#646464;letter-spacing:1.06px;-webkit-text-stroke:0.8px #646464;transform:scaleX(1.0480);transform-origin:0 0;">08/11/2022</span>
<span class="t" style="left:609.0px;top:1184.2px;font-size:22.9px;color:#646464;letter-spacing:0.23px;-webkit-text-stroke:0.8px #646464;transform:scaleX(1.0480);transform-origin:0 0;">08:16</span>
<span class="t" style="left:959.0px;top:1166.2px;font-size:22.9px;color:#646464;letter-spacing:0.95px;-webkit-text-stroke:0.8px #646464;transform:scaleX(1.0480);transform-origin:0 0;">Invoice</span>
<span class="t" style="left:1321.5px;top:1166.2px;font-size:22.9px;color:#646464;letter-spacing:1.10px;-webkit-text-stroke:0.8px #646464;transform:scaleX(1.0480);transform-origin:0 0;">Dr Aaron Kilback</span>
<span class="t" style="left:1684.0px;top:1166.2px;font-size:22.9px;color:#646464;letter-spacing:0.54px;-webkit-text-stroke:0.8px #646464;transform:scaleX(1.0480);transform-origin:0 0;">INV-1937</span>
<span class="t" style="left:2409.0px;top:1166.2px;font-size:22.9px;color:#646464;letter-spacing:0.23px;-webkit-text-stroke:0.8px #646464;transform:scaleX(1.0480);transform-origin:0 0;">$9.00</span>
<span class="t" style="left:3134.0px;top:1166.2px;font-size:22.9px;color:#646464;letter-spacing:1.74px;-webkit-text-stroke:0.8px #646464;transform:scaleX(1.0480);transform-origin:0 0;">No</span>
<svg style="position:absolute;left:3524px;top:1156px;" width="40" height="40" viewBox="0 0 40 40" fill="none"><circle cx="20" cy="20" r="16.8" stroke="#606060" stroke-width="2.4"/><circle cx="20" cy="10.8" r="1.7" fill="#606060"/><path d="M20 17 V30.5" stroke="#606060" stroke-width="2.5" stroke-linecap="round"/></svg>
<svg style="position:absolute;left:3636px;top:1167px;" width="40" height="20" viewBox="0 0 40 20" fill="none"><g fill="#666"><circle cx="9" cy="9.8" r="2.8"/><circle cx="20" cy="9.8" r="2.8"/><circle cx="31" cy="9.8" r="2.8"/></g></svg>
<svg style="position:absolute;left:470px;top:1277px;" width="38" height="38" viewBox="0 0 38 38" fill="none"><rect x="3.3" y="3.3" width="31.4" height="31.4" rx="3.5" fill="#fff" stroke="#555" stroke-width="2.6"/></svg>
<span class="t" style="left:609.0px;top:1268.2px;font-size:22.9px;color:#646464;letter-spacing:0.87px;-webkit-text-stroke:0.8px #646464;transform:scaleX(1.0480);transform-origin:0 0;">02/12/2022</span>
<span class="t" style="left:609.0px;top:1304.2px;font-size:22.9px;color:#646464;letter-spacing:0.23px;-webkit-text-stroke:0.8px #646464;transform:scaleX(1.0480);transform-origin:0 0;">08:16</span>
<span class="t" style="left:959.0px;top:1286.2px;font-size:22.9px;color:#646464;letter-spacing:0.49px;-webkit-text-stroke:0.8px #646464;transform:scaleX(1.0480);transform-origin:0 0;">Expense</span>
<span class="t" style="left:1321.5px;top:1286.2px;font-size:22.9px;color:#646464;letter-spacing:0.87px;-webkit-text-stroke:0.8px #646464;transform:scaleX(1.0480);transform-origin:0 0;">Dr Leslie Steuber</span>
<span class="t" style="left:1684.0px;top:1286.2px;font-size:22.9px;color:#646464;letter-spacing:-0.90px;-webkit-text-stroke:0.8px #646464;transform:scaleX(1.0480);transform-origin:0 0;">EXP-23</span>
<span class="t" style="left:2046.0px;top:1286.2px;font-size:22.9px;color:#646464;letter-spacing:0.73px;-webkit-text-stroke:0.8px #646464;transform:scaleX(1.0480);transform-origin:0 0;">Expense Dr Danny Gleason</span>
<span class="t" style="left:2409.0px;top:1286.2px;font-size:22.9px;color:#646464;letter-spacing:0.11px;-webkit-text-stroke:0.8px #646464;transform:scaleX(1.0480);transform-origin:0 0;">$73.45</span>
<span class="t" style="left:3134.0px;top:1286.2px;font-size:22.9px;color:#646464;letter-spacing:1.74px;-webkit-text-stroke:0.8px #646464;transform:scaleX(1.0480);transform-origin:0 0;">No</span>
<svg style="position:absolute;left:3524px;top:1276px;" width="40" height="40" viewBox="0 0 40 40" fill="none"><circle cx="20" cy="20" r="16.8" stroke="#606060" stroke-width="2.4"/><circle cx="20" cy="10.8" r="1.7" fill="#606060"/><path d="M20 17 V30.5" stroke="#606060" stroke-width="2.5" stroke-linecap="round"/></svg>
<svg style="position:absolute;left:3636px;top:1287px;" width="40" height="20" viewBox="0 0 40 20" fill="none"><g fill="#666"><circle cx="9" cy="9.8" r="2.8"/><circle cx="20" cy="9.8" r="2.8"/><circle cx="31" cy="9.8" r="2.8"/></g></svg>
<div style="position:absolute;left:448px;top:1356px;width:3254px;height:120px;background:#f9f9f9;"></div>
<svg style="position:absolute;left:470px;top:1397px;" width="38" height="38" viewBox="0 0 38 38" fill="none"><rect x="3.3" y="3.3" width="31.4" height="31.4" rx="3.5" fill="#fff" stroke="#555" stroke-width="2.6"/></svg>
<span class="t" style="left:609.0px;top:1388.2px;font-size:22.9px;color:#646464;letter-spacing:1.06px;-webkit-text-stroke:0.8px #646464;transform:scaleX(1.0480);transform-origin:0 0;">11/10/2022</span>
<span class="t" style="left:609.0px;top:1424.2px;font-size:22.9px;color:#646464;letter-spacing:0.23px;-webkit-text-stroke:0.8px #646464;transform:scaleX(1.0480);transform-origin:0 0;">08:16</span>
<span class="t" style="left:959.0px;top:1406.2px;font-size:22.9px;color:#646464;letter-spacing:0.49px;-webkit-text-stroke:0.8px #646464;transform:scaleX(1.0480);transform-origin:0 0;">Expense</span>
<span class="t" style="left:1321.5px;top:1406.2px;font-size:22.9px;color:#646464;letter-spacing:0.79px;-webkit-text-stroke:0.8px #646464;transform:scaleX(1.0480);transform-origin:0 0;">Dr Camille Kassulke</span>
<span class="t" style="left:1684.0px;top:1406.2px;font-size:22.9px;color:#646464;letter-spacing:-0.65px;-webkit-text-stroke:0.8px #646464;transform:scaleX(1.0480);transform-origin:0 0;">EXP-192</span>
<span class="t" style="left:2772.0px;top:1406.2px;font-size:22.9px;color:#646464;letter-spacing:0.23px;-webkit-text-stroke:0.8px #646464;transform:scaleX(1.0480);transform-origin:0 0;">$6.00</span>
<span class="t" style="left:3134.0px;top:1406.2px;font-size:22.9px;color:#646464;letter-spacing:1.74px;-webkit-text-stroke:0.8px #646464;transform:scaleX(1.0480);transform-origin:0 0;">No</span>
<svg style="position:absolute;left:3524px;top:1396px;" width="40" height="40" viewBox="0 0 40 40" fill="none"><circle cx="20" cy="20" r="16.8" stroke="#606060" stroke-width="2.4"/><circle cx="20" cy="10.8" r="1.7" fill="#606060"/><path d="M20 17 V30.5" stroke="#606060" stroke-width="2.5" stroke-linecap="round"/></svg>
<svg style="position:absolute;left:3636px;top:1407px;" width="40" height="20" viewBox="0 0 40 20" fill="none"><g fill="#666"><circle cx="9" cy="9.8" r="2.8"/><circle cx="20" cy="9.8" r="2.8"/><circle cx="31" cy="9.8" r="2.8"/></g></svg>
<svg style="position:absolute;left:470px;top:1517px;" width="38" height="38" viewBox="0 0 38 38" fill="none"><rect x="3.3" y="3.3" width="31.4" height="31.4" rx="3.5" fill="#fff" stroke="#555" stroke-width="2.6"/></svg>
<span class="t" style="left:609.0px;top:1508.2px;font-size:22.9px;color:#646464;letter-spacing:1.06px;-webkit-text-stroke:0.8px #646464;transform:scaleX(1.0480);transform-origin:0 0;">11/21/2022</span>
<span class="t" style="left:609.0px;top:1544.2px;font-size:22.9px;color:#646464;letter-spacing:0.23px;-webkit-text-stroke:0.8px #646464;transform:scaleX(1.0480);transform-origin:0 0;">08:16</span>
<span class="t" style="left:959.0px;top:1526.2px;font-size:22.9px;color:#646464;letter-spacing:1.69px;-webkit-text-stroke:0.8px #646464;transform:scaleX(1.0480);transform-origin:0 0;">Adjustment</span>
<span class="t" style="left:1321.5px;top:1526.2px;font-size:22.9px;color:#646464;letter-spacing:1.25px;-webkit-text-stroke:0.8px #646464;transform:scaleX(1.0480);transform-origin:0 0;">Dr Conrad Gutmann</span>
<span class="t" style="left:1684.0px;top:1526.2px;font-size:22.9px;color:#646464;letter-spacing:-0.77px;-webkit-text-stroke:0.8px #646464;transform:scaleX(1.0480);transform-origin:0 0;">ADJ-23</span>
<span class="t" style="left:2046.0px;top:1526.2px;font-size:22.9px;color:#646464;letter-spacing:0.56px;-webkit-text-stroke:0.8px #646464;transform:scaleX(1.0480);transform-origin:0 0;">Reverse Journal</span>
<span class="t" style="left:2409.0px;top:1526.2px;font-size:22.9px;color:#646464;letter-spacing:0.11px;-webkit-text-stroke:0.8px #646464;transform:scaleX(1.0480);transform-origin:0 0;">$30.00</span>
<span class="t" style="left:3134.0px;top:1526.2px;font-size:22.9px;color:#646464;letter-spacing:1.74px;-webkit-text-stroke:0.8px #646464;transform:scaleX(1.0480);transform-origin:0 0;">No</span>
<svg style="position:absolute;left:3524px;top:1516px;" width="40" height="40" viewBox="0 0 40 40" fill="none"><circle cx="20" cy="20" r="16.8" stroke="#606060" stroke-width="2.4"/><circle cx="20" cy="10.8" r="1.7" fill="#606060"/><path d="M20 17 V30.5" stroke="#606060" stroke-width="2.5" stroke-linecap="round"/></svg>
<svg style="position:absolute;left:3636px;top:1527px;" width="40" height="20" viewBox="0 0 40 20" fill="none"><g fill="#666"><circle cx="9" cy="9.8" r="2.8"/><circle cx="20" cy="9.8" r="2.8"/><circle cx="31" cy="9.8" r="2.8"/></g></svg>
<div style="position:absolute;left:448px;top:1596px;width:3254px;height:118px;background:#f9f9f9;border-radius:0 0 8px 8px;"></div>
<svg style="position:absolute;left:470px;top:1637px;" width="38" height="38" viewBox="0 0 38 38" fill="none"><rect x="3.3" y="3.3" width="31.4" height="31.4" rx="3.5" fill="#fff" stroke="#555" stroke-width="2.6"/></svg>
<span class="t" style="left:609.0px;top:1628.2px;font-size:22.9px;color:#646464;letter-spacing:0.87px;-webkit-text-stroke:0.8px #646464;transform:scaleX(1.0480);transform-origin:0 0;">12/10/2023</span>
<span class="t" style="left:609.0px;top:1664.2px;font-size:22.9px;color:#646464;letter-spacing:0.23px;-webkit-text-stroke:0.8px #646464;transform:scaleX(1.0480);transform-origin:0 0;">08:16</span>
<span class="t" style="left:959.0px;top:1646.2px;font-size:22.9px;color:#646464;letter-spacing:1.69px;-webkit-text-stroke:0.8px #646464;transform:scaleX(1.0480);transform-origin:0 0;">Adjustment</span>
<span class="t" style="left:1321.5px;top:1646.2px;font-size:22.9px;color:#646464;letter-spacing:0.89px;-webkit-text-stroke:0.8px #646464;transform:scaleX(1.0480);transform-origin:0 0;">Dr Rhonda Dickens</span>
<span class="t" style="left:1684.0px;top:1646.2px;font-size:22.9px;color:#646464;letter-spacing:-0.77px;-webkit-text-stroke:0.8px #646464;transform:scaleX(1.0480);transform-origin:0 0;">ADJ-17</span>
<span class="t" style="left:2046.0px;top:1646.2px;font-size:22.9px;color:#646464;letter-spacing:0.56px;-webkit-text-stroke:0.8px #646464;transform:scaleX(1.0480);transform-origin:0 0;">Reverse Journal</span>
<span class="t" style="left:2772.0px;top:1646.2px;font-size:22.9px;color:#646464;letter-spacing:0.11px;-webkit-text-stroke:0.8px #646464;transform:scaleX(1.0480);transform-origin:0 0;">$13.00</span>
<span class="t" style="left:3134.0px;top:1646.2px;font-size:22.9px;color:#646464;letter-spacing:1.74px;-webkit-text-stroke:0.8px #646464;transform:scaleX(1.0480);transform-origin:0 0;">No</span>
<svg style="position:absolute;left:3524px;top:1636px;" width="40" height="40" viewBox="0 0 40 40" fill="none"><circle cx="20" cy="20" r="16.8" stroke="#606060" stroke-width="2.4"/><circle cx="20" cy="10.8" r="1.7" fill="#606060"/><path d="M20 17 V30.5" stroke="#606060" stroke-width="2.5" stroke-linecap="round"/></svg>
<svg style="position:absolute;left:3636px;top:1647px;" width="40" height="20" viewBox="0 0 40 20" fill="none"><g fill="#666"><circle cx="9" cy="9.8" r="2.8"/><circle cx="20" cy="9.8" r="2.8"/><circle cx="31" cy="9.8" r="2.8"/></g></svg>
<svg style="position:absolute;left:480px;top:1756px;" width="244" height="32" viewBox="480 1756 244 32" fill="none"><g fill="#aaa"><rect x="487.9" y="1764" width="1.9" height="16"/><path d="M489.7 1772 L500.8 1764 V1780 Z"/><path d="M535.5 1772 L548.9 1764 V1780 Z"/><path d="M668.8 1772 L655.3 1764 V1780 Z"/><path d="M714.9 1772 L703.2 1764 V1780 Z"/><rect x="714.7" y="1764" width="1.9" height="16"/></g></svg>
<div style="position:absolute;left:578px;top:1748px;width:48px;height:48px;background:#eae8e9;border-radius:8px;"></div>
<span class="t" style="left:594.2px;top:1757.8px;font-size:28px;color:#007bff;">1</span>
<span class="t" style="left:3428.6px;top:1760.1px;font-size:27.1px;color:#666;letter-spacing:0.66px;-webkit-text-stroke:0.7px #666;transform:scaleX(1.0332);transform-origin:0 0;">1-10 of 10 items</span>
<svg style="position:absolute;left:3660px;top:1750px;" width="40" height="44" viewBox="3660 1750 40 44" fill="none"><g stroke="#666" stroke-width="2.6" fill="none" stroke-linecap="round" stroke-linejoin="round"><path d="M3693.5 1774.8 A13.6 13.6 0 1 1 3691.6 1767"/><path d="M3693.4 1757.4 V1767 H3683.8"/></g></svg>
</body></html>
